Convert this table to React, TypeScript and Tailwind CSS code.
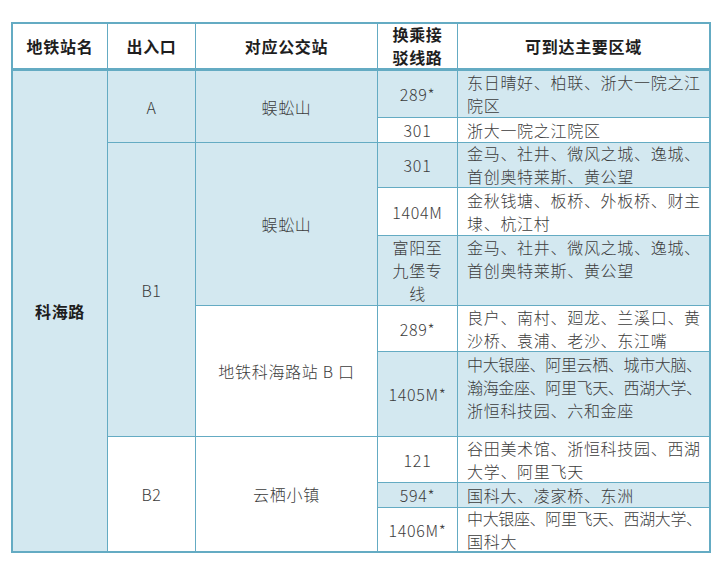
import React from 'react';

const line = "h-[23px] leading-[23px] whitespace-nowrap";
const tight = "h-[23px] leading-[23px] whitespace-nowrap tracking-[-0.35px]";

const blue = "bg-[#d3e8f0]";
const white = "bg-white";
const mid = "flex flex-col items-center justify-center text-center";
const areaMid = "flex flex-col justify-center pl-[9px]";
const areaTop = "flex flex-col justify-start pl-[9px]";
const head = "bg-white border-b-2 border-[#64abc3] flex flex-col items-center justify-center font-bold text-[#1e1e1e]";

const Lines = ({ items, tightIdx = [] }: { items: string[]; tightIdx?: number[] }) => (
  <div>
    {items.map((t, i) => (
      <div key={i} className={tightIdx.includes(i) ? tight : line}>
        {t}
      </div>
    ))}
  </div>
);

const App = () => {
  return (
    <div
      className="w-[720px] h-[580px] bg-white pt-[22px] pl-[11px] text-[16px] font-light text-[#3c3c3c] tracking-[0.7px]"
      style={{ fontFamily: '"Noto Sans CJK SC", "Noto Sans", sans-serif' }}
    >
      <div className="w-[700px] grid grid-cols-[94px_87px_181px_79px_251px] grid-rows-[46px_46px_24px_44px_47px_69px_45px_84px_45px_24px_43px] gap-px border-2 border-[#64abc3] bg-[#64abc3]">
        {/* header */}
        <div className={`${head} col-start-1 row-start-1`}>地铁站名</div>
        <div className={`${head} col-start-2 row-start-1`}>出入口</div>
        <div className={`${head} col-start-3 row-start-1`}>对应公交站</div>
        <div className={`${head} col-start-4 row-start-1`}>
          <div className="leading-[23px]">换乘接</div>
          <div className="leading-[23px]">驳线路</div>
        </div>
        <div className={`${head} col-start-5 row-start-1`}>可到达主要区域</div>

        {/* station */}
        <div className={`${blue} ${mid} col-start-1 row-start-2 row-span-10 font-bold text-[#1e1e1e]`}>科海路</div>

        {/* exit A */}
        <div className={`${blue} ${mid} col-start-2 row-start-2 row-span-2`}>A</div>
        <div className={`${blue} ${mid} col-start-3 row-start-2 row-span-2`}>蜈蚣山</div>
        <div className={`${blue} ${mid} col-start-4 row-start-2`}>289*</div>
        <div className={`${blue} ${areaMid} col-start-5 row-start-2`}>
          <Lines items={["东日晴好、柏联、浙大一院之江", "院区"]} />
        </div>
        <div className={`${white} ${mid} col-start-4 row-start-3`}>301</div>
        <div className={`${white} ${areaMid} col-start-5 row-start-3`}>
          <Lines items={["浙大一院之江院区"]} />
        </div>

        {/* exit B1 */}
        <div className={`${blue} ${mid} col-start-2 row-start-4 row-span-5`}>B1</div>
        <div className={`${blue} ${mid} col-start-3 row-start-4 row-span-3`}>蜈蚣山</div>
        <div className={`${blue} ${mid} col-start-4 row-start-4`}>301</div>
        <div className={`${blue} ${areaMid} col-start-5 row-start-4`}>
          <Lines items={["金马、社井、微风之城、逸城、", "首创奥特莱斯、黄公望"]} />
        </div>
        <div className={`${white} ${mid} col-start-4 row-start-5`}>1404M</div>
        <div className={`${white} ${areaMid} col-start-5 row-start-5`}>
          <Lines items={["金秋钱塘、板桥、外板桥、财主", "埭、杭江村"]} />
        </div>
        <div className={`${blue} ${mid} col-start-4 row-start-6`}>
          <Lines items={["富阳至", "九堡专", "线"]} />
        </div>
        <div className={`${blue} ${areaTop} col-start-5 row-start-6`}>
          <Lines items={["金马、社井、微风之城、逸城、", "首创奥特莱斯、黄公望"]} />
        </div>

        <div className={`${white} ${mid} col-start-3 row-start-7 row-span-2`}>地铁科海路站 B 口</div>
        <div className={`${white} ${mid} col-start-4 row-start-7`}>289*</div>
        <div className={`${white} ${areaMid} col-start-5 row-start-7`}>
          <Lines items={["良户、南村、廻龙、兰溪口、黄", "沙桥、袁浦、老沙、东江嘴"]} />
        </div>
        <div className={`${blue} ${mid} col-start-4 row-start-8`}>1405M*</div>
        <div className={`${blue} ${areaTop} col-start-5 row-start-8 pt-[1px]`}>
          <Lines
            items={["中大银座、阿里云栖、城市大脑、", "瀚海金座、阿里飞天、西湖大学、", "浙恒科技园、六和金座"]}
            tightIdx={[0, 1]}
          />
        </div>

        {/* exit B2 */}
        <div className={`${white} ${mid} col-start-2 row-start-9 row-span-3`}>B2</div>
        <div className={`${white} ${mid} col-start-3 row-start-9 row-span-3`}>云栖小镇</div>
        <div className={`${white} ${mid} col-start-4 row-start-9`}>121</div>
        <div className={`${white} ${areaMid} col-start-5 row-start-9`}>
          <Lines items={["谷田美术馆、浙恒科技园、西湖", "大学、阿里飞天"]} />
        </div>
        <div className={`${blue} ${mid} col-start-4 row-start-10`}>594*</div>
        <div className={`${blue} ${areaMid} col-start-5 row-start-10`}>
          <Lines items={["国科大、凌家桥、东洲"]} />
        </div>
        <div className={`${white} ${mid} col-start-4 row-start-11`}>1406M*</div>
        <div className={`${white} ${areaMid} col-start-5 row-start-11`}>
          <Lines items={["中大银座、阿里飞天、西湖大学、", "国科大"]} tightIdx={[0]} />
        </div>
      </div>
    </div>
  );
};

export default App;
